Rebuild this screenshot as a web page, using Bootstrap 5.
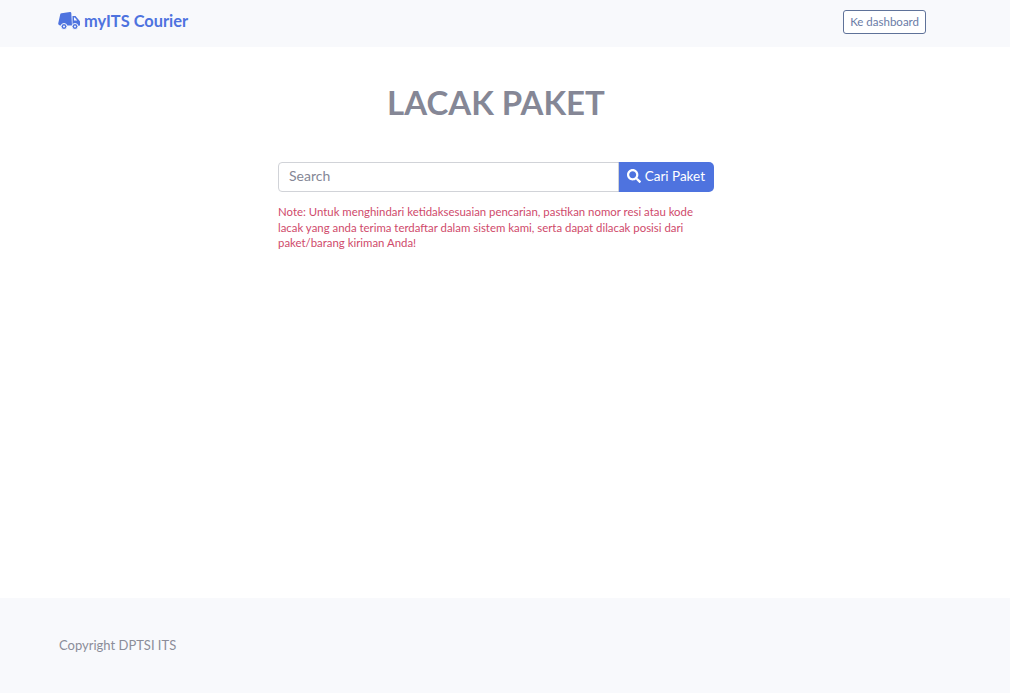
<!DOCTYPE html>
<html lang="id">
<head>
  <meta charset="UTF-8">
  <title>Lacak Paket</title>
  <link href="https://cdn.jsdelivr.net/npm/bootstrap@5.3.0/dist/css/bootstrap.min.css" rel="stylesheet">
  <style>
    body { font-family: Lato, "Open Sans", sans-serif; color: #858796; font-size: 14px; }
    .top-bar { background-color: #f8f9fc; height: 47px; padding: 0 84px 3px 58px; }
    .brand-link { color: #4e73df; font-weight: 700; font-size: 16.4px; text-decoration: none; gap: 4px; margin-bottom: 2px; }
    .btn-dash { color: #6a7ba6; border: 1px solid #5f7299; font-size: 11.5px; padding: 3px 6px; border-radius: 3px; background: #fff; line-height: 16px; }
    .main-area { height: 551px; padding-top: 35px; padding-right: 18px; }
    .page-title { font-size: 33px; font-weight: 700; color: #858796; margin: 0 0 40px 0; line-height: 40px; }
    .search-box { width: 436px; }
    .search-box .form-control { height: 30px; font-size: 14px; padding: 2px 10px 6px; border-radius: 4px 0 0 4px; border-color: #d1d3d8; }
    .search-box .form-control::placeholder { color: #858796; }
    .btn-cari { background-color: #4e73df; color: #fff; font-size: 13.5px; height: 30px; padding: 0 9px 2px; border: 0; border-radius: 0 5px 5px 0; white-space: nowrap; }
    .note-text { color: #cf4a6b; font-size: 11.4px; line-height: 15.5px; margin-top: 12px; }
    .bottom-bar { background-color: #f8f9fc; height: 95px; padding-left: 59px; font-size: 13px; color: #8b8d99; }
  </style>
</head>
<body>
  <nav class="top-bar d-flex align-items-center justify-content-between">
    <a href="#" class="brand-link d-flex align-items-center">
      <svg width="22" height="18" viewBox="0 0 22 18" fill="#4e73df">
        <path d="M3.500 1.200L12 0.100c.7-.1 1.200.3 1.300 1L14 13.500H2.300C1 13.500.2 12.700.2 11.600L2.200 2.400c.1-.7.6-1.100 1.300-1.200z"/>
        <path d="M14.500 4h3l3.800 4.600.7.900v3.500c0 .4-.3.700-.7.700h-6.800zM16 5.500v3h3.200l-2.400-3z"/>
        <circle cx="6" cy="14.500" r="3" stroke="#f8f9fc" stroke-width="1"/>
        <circle cx="17" cy="14.500" r="3" stroke="#f8f9fc" stroke-width="1"/>
        <circle cx="6" cy="14.500" r="1" fill="#f8f9fc"/>
        <circle cx="17" cy="14.500" r="1" fill="#f8f9fc"/>
      </svg>
      myITS Courier
    </a>
    <a href="#" class="btn btn-dash">Ke dashboard</a>
  </nav>
  <main class="main-area d-flex flex-column align-items-center">
    <h1 class="page-title text-center">LACAK PAKET</h1>
    <div class="search-box">
      <div class="input-group">
        <input type="text" class="form-control" placeholder="Search">
        <button class="btn-cari d-flex align-items-center gap-1" type="button">
          <svg width="14" height="14" viewBox="0 0 512 512" fill="#fff"><path d="M505 442.700L405.300 343c-4.500-4.500-10.600-7-17-7H372c27.600-35.300 44-79.700 44-128C416 93.100 322.900 0 208 0S0 93.100 0 208s93.100 208 208 208c48.300 0 92.700-16.400 128-44v16.300c0 6.400 2.500 12.500 7 17l99.700 99.700c9.400 9.400 24.600 9.400 33.900 0l28.300-28.300c9.400-9.400 9.400-24.600.1-34zM208 336c-70.700 0-128-57.200-128-128 0-70.700 57.200-128 128-128 70.700 0 128 57.200 128 128 0 70.700-57.200 128-128 128z"/></svg>
          Cari Paket
        </button>
      </div>
      <p class="note-text">Note: Untuk menghindari ketidaksesuaian pencarian, pastikan nomor resi atau kode lacak yang anda terima terdaftar dalam sistem kami, serta dapat dilacak posisi dari paket/barang kiriman Anda!</p>
    </div>
  </main>
  <footer class="bottom-bar d-flex align-items-center">Copyright DPTSI ITS</footer>
  <script src="https://cdn.jsdelivr.net/npm/bootstrap@5.3.0/dist/js/bootstrap.bundle.min.js"></script>
</body>
</html>
